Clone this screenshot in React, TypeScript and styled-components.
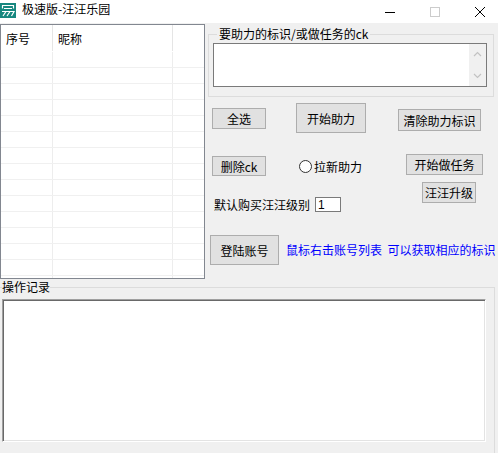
import React, { useState } from 'react';
import styled, { createGlobalStyle } from 'styled-components';

const GlobalStyle = createGlobalStyle`
    html, body {
        margin: 0;
        padding: 0;
        background: #f0f0f0;
    }
    body {
        font-family: "Noto Sans CJK SC", "Noto Sans", sans-serif;
        font-size: 12px;
        color: #000;
    }
`;

const ROW_COUNT = 15;

export default function App() {
    const [level, setLevel] = useState('1');
    const [invite, setInvite] = useState(false);
    const rows = Array.from({ length: ROW_COUNT }, (_, i) => i);

    return (
        <Window>
            <GlobalStyle />
            <TitleBar>
                <AppIcon width="16" height="15" viewBox="0 0 16 15">
                    <rect width="16" height="15" fill="#17877f" />
                    <path d="M2 2.5h12M2.5 2.5v3M13.5 2.5v3M4 5.5h8M2 8.5h12l-2.5 4.5M6 8.5l-3 4.5M10 8.5l-3 4.5" stroke="#fff" strokeWidth="1.2" fill="none" />
                </AppIcon>
                <TitleText>极速版-汪汪乐园</TitleText>
                <WindowControls>
                    <svg width="10" height="10" viewBox="0 0 10 10">
                        <path d="M0 5.5h10" stroke="#000" strokeWidth="1" />
                    </svg>
                    <svg width="10" height="10" viewBox="0 0 10 10">
                        <rect x="0.5" y="0.5" width="9" height="9" stroke="#cccccc" fill="none" />
                    </svg>
                    <svg width="10" height="10" viewBox="0 0 10 10">
                        <path d="M0 0L10 10M10 0L0 10" stroke="#000" strokeWidth="1" />
                    </svg>
                </WindowControls>
            </TitleBar>

            <TopArea>
                <ListView>
                    <HeaderRow>
                        <HeaderCell $w={52}>序号</HeaderCell>
                        <HeaderCell $w={120}>昵称</HeaderCell>
                        <HeaderCell $w={30} $last />
                    </HeaderRow>
                    {rows.map((i) => (
                        <GridRow key={i}>
                            <GridCell $w={52} />
                            <GridCell $w={120} />
                            <GridCell $w={30} $last />
                        </GridRow>
                    ))}
                </ListView>

                <RightPanel>
                    <TargetGroup>
                        <GroupLegend>要助力的标识/或做任务的ck</GroupLegend>
                        <MemoBox>
                            <MemoText />
                            <ScrollTrack>
                                <svg width="9" height="6" viewBox="0 0 9 6">
                                    <path d="M1 5l3.5-3.5L8 5" stroke="#c2c2c2" strokeWidth="1.2" fill="none" />
                                </svg>
                                <svg width="9" height="6" viewBox="0 0 9 6">
                                    <path d="M1 1l3.5 3.5L8 1" stroke="#c2c2c2" strokeWidth="1.2" fill="none" />
                                </svg>
                            </ScrollTrack>
                        </MemoBox>
                    </TargetGroup>

                    <ActionRow $mt={6} $h={30}>
                        <Button $w={54} $h={21} $ml={7} $mt={5}>全选</Button>
                        <Button $w={70} $h={30} $ml={30}>开始助力</Button>
                        <Button $w={83} $h={22} $ml={32} $mt={6}>清除助力标识</Button>
                    </ActionRow>

                    <ActionRow $mt={21} $h={22}>
                        <Button $w={54} $h={20} $ml={7} $mt={2}>删除ck</Button>
                        <RadioItem onClick={() => setInvite(!invite)}>
                            <RadioCircle $checked={invite} />
                            <span>拉新助力</span>
                        </RadioItem>
                        <Button $w={77} $h={21} $ml={44}>开始做任务</Button>
                    </ActionRow>

                    <ActionRow $mt={6} $h={30}>
                        <LevelField>
                            <LevelLabel>默认购买汪汪级别</LevelLabel>
                            <LevelInput value={level} onChange={(e) => setLevel(e.target.value)} />
                        </LevelField>
                        <Button $w={54} $h={21} $ml={81}>汪汪升级</Button>
                    </ActionRow>

                    <ActionRow $mt={23} $h={30} $center>
                        <Button $w={69} $h={30} $ml={5}>登陆账号</Button>
                        <Hint>鼠标右击账号列表  可以获取相应的标识</Hint>
                    </ActionRow>
                </RightPanel>
            </TopArea>

            <LogGroup>
                <LogLegend>操作记录</LogLegend>
                <LogBox />
            </LogGroup>
        </Window>
    );
}

const Window = styled.div`
    width: 498px;
    height: 453px;
    overflow: hidden;
    background: #f0f0f0;
    display: flex;
    flex-direction: column;
`;

const TitleBar = styled.div`
    height: 23px;
    flex: none;
    background: #fff;
    display: flex;
    align-items: flex-start;
    overflow: hidden;
`;

const AppIcon = styled.svg`
    margin: 3px 0 0 0;
    flex: none;
`;

const TitleText = styled.span`
    margin: 1px 0 0 6px;
    line-height: 16px;
    font-size: 12px;
    color: #000;
`;

const WindowControls = styled.div`
    margin: 7px 13px 0 auto;
    display: flex;
    gap: 35px;
    & svg {
        display: block;
    }
`;

const TopArea = styled.div`
    display: flex;
    align-items: flex-start;
    flex: none;
`;

const ListView = styled.div`
    margin-top: 1px;
    width: 205px;
    height: 255px;
    box-sizing: border-box;
    border: 1px solid #828790;
    background: #fff;
    overflow: hidden;
    flex: none;
`;

const HeaderRow = styled.div`
    display: flex;
    height: 27px;
`;

const HeaderCell = styled.div<{ $w: number; $last?: boolean }>`
    width: ${(p) => p.$w}px;
    flex: ${(p) => (p.$last ? '1' : 'none')};
    box-sizing: border-box;
    height: 26px;
    padding: 6px 0 0 5px;
    line-height: 16px;
    border-right: ${(p) => (p.$last ? 'none' : '1px solid #e5e5e5')};
`;

const GridRow = styled.div`
    display: flex;
    height: 16px;
    box-sizing: border-box;
    border-bottom: 1px solid #f0f0f0;
`;

const GridCell = styled.div<{ $w: number; $last?: boolean }>`
    width: ${(p) => p.$w}px;
    flex: ${(p) => (p.$last ? '1' : 'none')};
    box-sizing: border-box;
    border-right: ${(p) => (p.$last ? 'none' : '1px solid #ededed')};
`;

const RightPanel = styled.div`
    flex: 1;
    display: flex;
    flex-direction: column;
`;

const TargetGroup = styled.fieldset`
    margin: 4px 0 0 3px;
    padding: 2px 6px 9px 4px;
    width: 286px;
    box-sizing: border-box;
    border: 1px solid #dcdcdc;
    min-width: 0;
`;

const GroupLegend = styled.legend`
    margin-left: 4px;
    padding: 0 2px;
    line-height: 14px;
    font-size: 12px;
`;

const MemoBox = styled.div`
    display: flex;
    height: 44px;
    box-sizing: border-box;
    border: 1px solid #7a7a7a;
    background: #fff;
`;

const MemoText = styled.div`
    flex: 1;
`;

const ScrollTrack = styled.div`
    width: 17px;
    background: #f0f0f0;
    display: flex;
    flex-direction: column;
    align-items: center;
    justify-content: space-between;
    padding: 7px 0 7px;
    box-sizing: border-box;
    & svg {
        display: block;
    }
`;

const ActionRow = styled.div<{ $mt: number; $h: number; $center?: boolean }>`
    display: flex;
    align-items: ${(p) => (p.$center ? 'center' : 'flex-start')};
    margin-top: ${(p) => p.$mt}px;
    height: ${(p) => p.$h}px;
`;

const Button = styled.button<{ $w: number; $h: number; $ml: number; $mt?: number }>`
    flex: none;
    width: ${(p) => p.$w}px;
    height: ${(p) => p.$h}px;
    margin: ${(p) => p.$mt || 0}px 0 0 ${(p) => p.$ml}px;
    padding: 0;
    box-sizing: border-box;
    background: #e1e1e1;
    border: 1px solid #adadad;
    border-radius: 0;
    font-family: "Noto Sans CJK SC", "Noto Sans", sans-serif;
    font-size: 12px;
    color: #000;
    white-space: nowrap;
    cursor: pointer;
    outline: none;
`;

const RadioItem = styled.label`
    flex: none;
    width: 63px;
    margin: 6px 0 0 33px;
    display: flex;
    align-items: center;
    gap: 2px;
    line-height: 13px;
    white-space: nowrap;
    cursor: pointer;
`;

const RadioCircle = styled.span<{ $checked: boolean }>`
    width: 13px;
    height: 13px;
    box-sizing: border-box;
    border-radius: 50%;
    border: 1px solid #333;
    background: #fff;
    flex: none;
    display: flex;
    align-items: center;
    justify-content: center;
    &::after {
        content: '';
        width: 5px;
        height: 5px;
        border-radius: 50%;
        background: ${(p) => (p.$checked ? '#333' : 'transparent')};
    }
`;

const LevelField = styled.div`
    flex: none;
    margin: 15px 0 0 9px;
    display: flex;
    align-items: center;
    gap: 5px;
`;

const LevelLabel = styled.span`
    width: 96px;
    white-space: nowrap;
    line-height: 15px;
`;

const LevelInput = styled.input`
    width: 26px;
    height: 15px;
    box-sizing: border-box;
    border: 1px solid #7a7a7a;
    padding: 0 0 0 2px;
    margin: 0;
    font-family: "Liberation Sans", sans-serif;
    font-size: 12px;
    line-height: 13px;
    outline: none;
    background: #fff;
`;

const Hint = styled.span`
    margin-left: 7px;
    color: #0000ff;
    white-space: pre;
    line-height: 14px;
`;

const LogGroup = styled.fieldset`
    margin: 1px 0 0 0;
    padding: 5px 8px 20px 2px;
    width: 495px;
    box-sizing: border-box;
    border: 1px solid #dcdcdc;
    border-left: none;
    min-width: 0;
    flex: none;
`;

const LogLegend = styled.legend`
    padding: 0;
    line-height: 14px;
    font-size: 12px;
`;

const LogBox = styled.div`
    height: 143px;
    box-sizing: border-box;
    background: #fff;
    border: 1px solid;
    border-color: #a0a0a0 #fff #fff #a0a0a0;
    box-shadow: inset 1px 1px 0 #696969, inset -1px -1px 0 #e3e3e3;
`;
